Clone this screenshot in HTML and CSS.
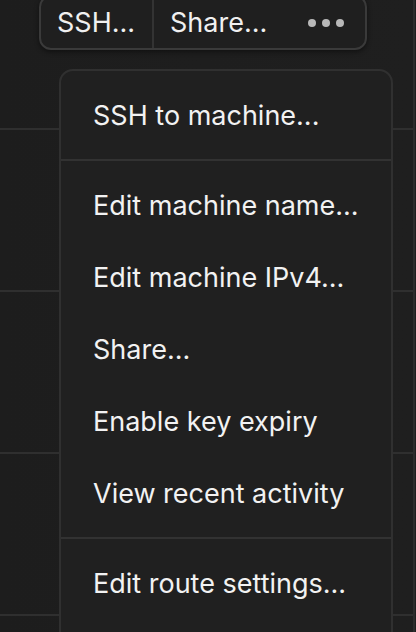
FILE: index.html
```html
<!DOCTYPE html>
<html>
<head>
<meta charset="utf-8">
<link rel="stylesheet" href="styles.css">
</head>
<body>
<div class="page">
  <div class="table">
    <div class="row first"></div>
    <div class="row"></div>
    <div class="row"></div>
    <div class="row"></div>
  </div>
  <div class="btn-group">
    <div class="btn ssh">SSH...</div>
    <div class="btn share">Share...</div>
    <div class="btn more"><span class="dot"></span><span class="dot"></span><span class="dot"></span></div>
  </div>
  <div class="menu">
    <div class="section">
      <div class="item">SSH to machine...</div>
    </div>
    <div class="section">
      <div class="item">Edit machine name...</div>
      <div class="item">Edit machine IPv4...</div>
      <div class="item">Share...</div>
      <div class="item">Enable key expiry</div>
      <div class="item">View recent activity</div>
    </div>
    <div class="section last">
      <div class="item">Edit route settings...</div>
    </div>
  </div>
</div>
</body>
</html>
```

FILE: styles.css
```css
html, body {
  margin: 0;
  padding: 0;
  background: #1e1e1e;
}
body {
  font-family: Inter, "Noto Sans", sans-serif;
  color: #f2f2f2;
  width: 416px;
  height: 632px;
  overflow: hidden;
}
.page {
  position: relative;
  width: 416px;
  height: 632px;
  overflow: hidden;
}
.table {
  width: 413px;
  height: 632px;
  border-right: 2px solid #2c2c2c;
  background: linear-gradient(90deg, #1d1d1d 0%, #1f1f1f 100%);
}
.row {
  height: 160px;
  border-bottom: 2px solid #2f2f2f;
}
.row.first {
  height: 128px;
}
.btn-group {
  position: absolute;
  left: 39px;
  top: -5px;
  width: 324px;
  height: 51px;
  display: flex;
  border: 2px solid #3a3a3a;
  border-radius: 12px;
  background: #1f1f1f;
  box-shadow: 0 2px 5px rgba(0, 0, 0, 0.45);
}
.btn {
  display: flex;
  align-items: center;
  font-size: 27px;
  line-height: 27px;
  color: #f0f0f0;
}
.ssh {
  padding: 0 16px;
  width: 79px;
  border-right: 2px solid #333;
}
.share {
  padding-left: 16px;
  width: 122px;
}
.more {
  gap: 6px;
  padding-left: 16px;
}
.dot {
  width: 8px;
  height: 8px;
  border-radius: 50%;
  background: #b8b8b8;
}
.menu {
  position: absolute;
  left: 59px;
  top: 69px;
  width: 330px;
  height: 620px;
  border: 2px solid #303030;
  border-radius: 14px;
  background: #202020;
}
.section {
  padding: 8px 0;
  border-bottom: 2px solid #323232;
}
.section.last {
  border-bottom: none;
}
.item {
  height: 72px;
  display: flex;
  align-items: center;
  padding-left: 32px;
  font-size: 27px;
  line-height: 27px;
  color: #f2f2f2;
}
```
